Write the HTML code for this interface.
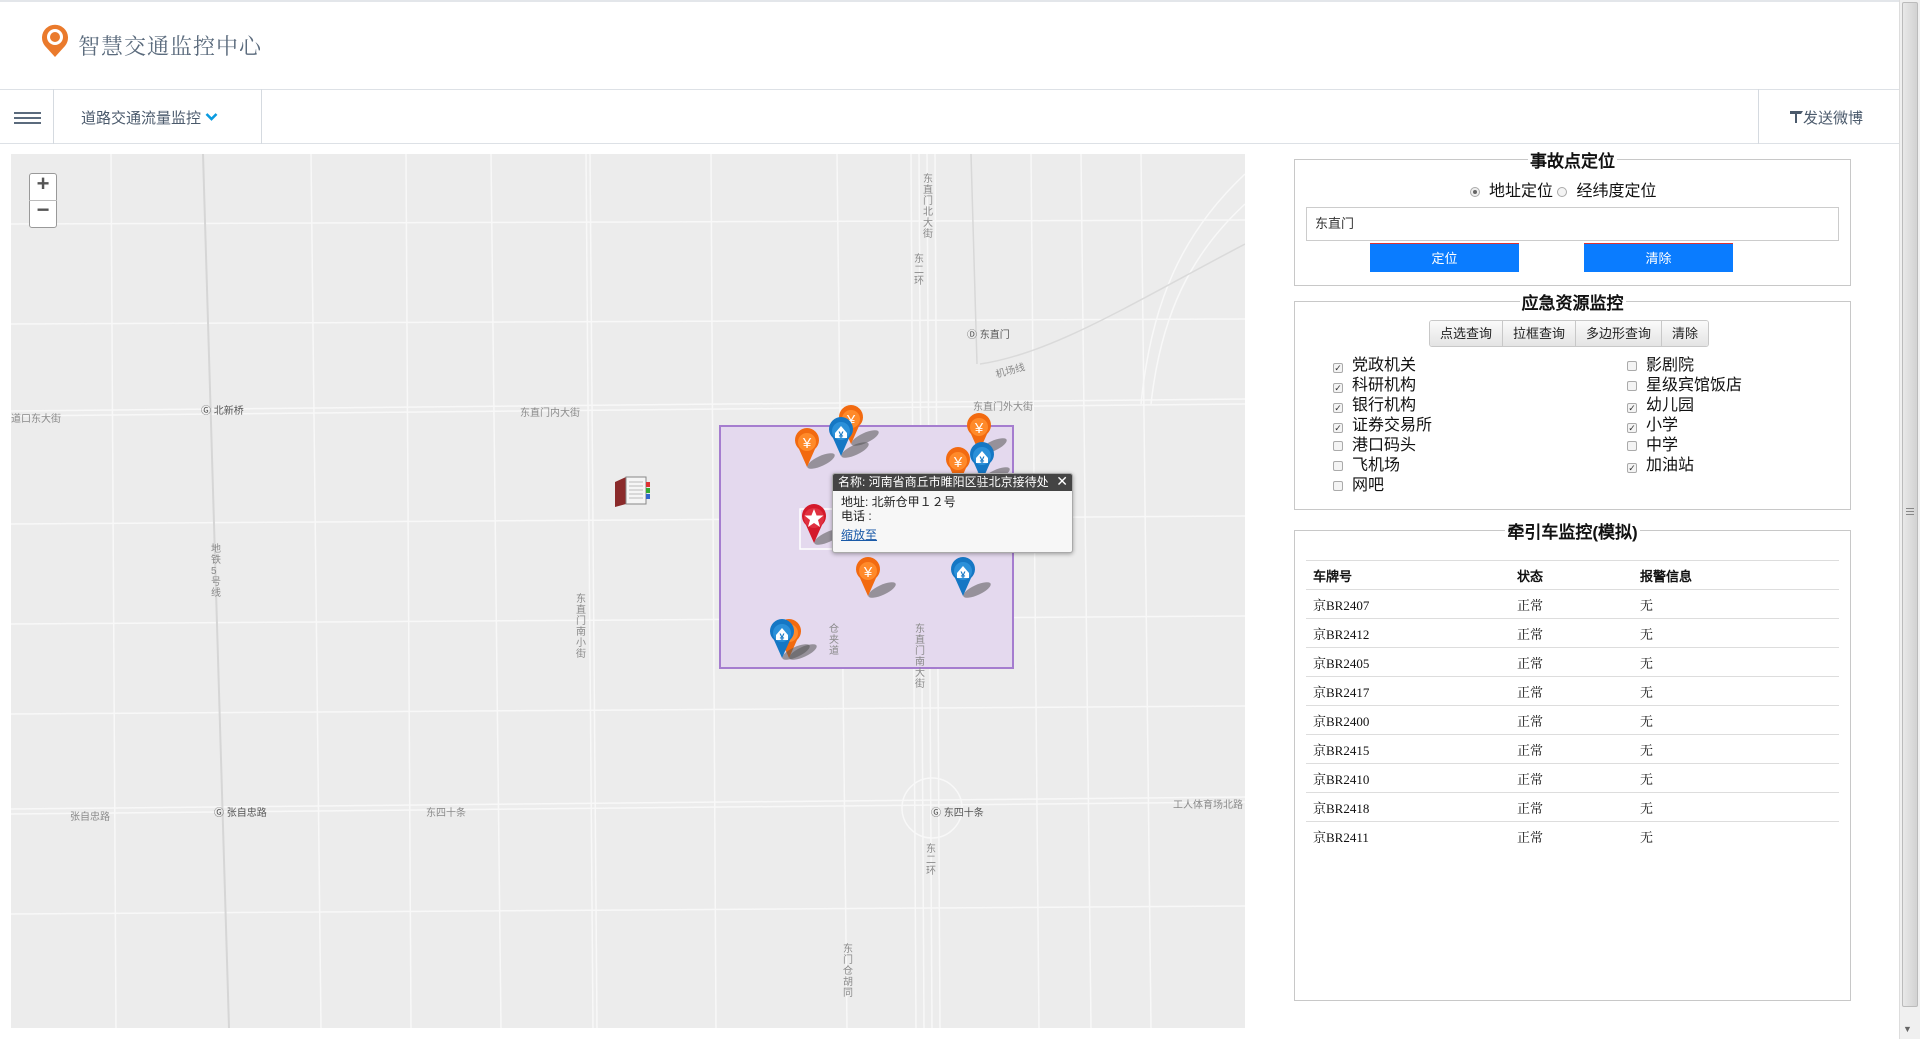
<!DOCTYPE html>
<html><head><meta charset="utf-8">
<style>
*{margin:0;padding:0;box-sizing:border-box}
body{width:1920px;height:1039px;overflow:hidden;background:#fff;font-family:"Liberation Sans","Noto Sans CJK SC",sans-serif;position:relative}
.abs{position:absolute}
.hdr-top{left:0;top:0;width:1900px;height:2px;background:#e3e6ea}
.title{left:78px;top:30px;font-size:22px;color:#5b6b7d;letter-spacing:1px;font-family:"Liberation Serif","Noto Serif CJK SC",serif}
.nav{left:0;top:89px;width:1900px;height:55px;border-top:1px solid #dde1e6;border-bottom:1px solid #dde1e6}
.vsep{top:89px;width:1px;height:55px;background:#d5dae0}
.menu{left:81px;top:107px;font-size:15px;color:#4b5a6c}
.send{left:1790px;top:107px;font-size:15px;color:#4b5a6c}
.scroll{left:1899px;top:0;width:21px;height:1039px;background:#f0f0f0;border-left:1px solid #ddd}
.thumb{left:1902px;top:2px;width:16px;height:1005px;background:linear-gradient(90deg,#e8e8e8,#d2d2d2);border:1px solid #bbb;border-radius:2px}
.map{left:11px;top:154px;width:1234px;height:874px;background:#ececec;overflow:hidden}
fieldset{position:absolute;border:2px solid #c8c8c8;border-width:1.5px}
legend{margin:0 auto;padding:0 2px;font-size:17px;font-weight:bold;color:#111;font-family:"Liberation Sans","WenQuanYi Zen Hei",sans-serif}
.btn{position:absolute;background:#0a7cff;color:#fff;font-size:13px;text-align:center;line-height:29px;height:29px;border-top:1px solid #d33}
.grp{position:absolute;left:1429px;top:320px;height:27px;display:flex;border:1px solid #c8c8c8;border-radius:3px;overflow:hidden}
.grp div{font-size:13px;line-height:25px;padding:0 10px;background:linear-gradient(#fafafa,#e4e4e4);border-right:1px solid #c8c8c8;color:#222}
.grp div:last-child{border-right:0}
.cb{position:absolute;font-size:16px;color:#111;line-height:20px;font-family:"Liberation Sans","WenQuanYi Zen Hei",sans-serif}
.cb i{display:inline-block;width:10px;height:10px;border:1px solid #aaa;border-radius:2px;background:#f4f4f4;margin-right:9px;vertical-align:-1px;font-style:normal;font-size:9px;line-height:9px;text-align:center;color:#333}
table{position:absolute;left:1306px;top:560px;width:533px;border-collapse:collapse;font-size:13px;font-family:"Liberation Serif","Noto Serif CJK SC",serif;color:#111}
td,th{height:29px;border-top:1.5px solid #ddd;text-align:left;padding-left:7px;font-weight:normal}
th{font-weight:bold;font-family:"Liberation Sans","WenQuanYi Zen Hei",sans-serif}
.lbl{position:absolute;font-size:10px;color:#8a8a8a}
</style></head><body>
<div class="abs hdr-top"></div>
<svg class="abs" style="left:40px;top:24px" width="30" height="34" viewBox="0 0 30 34"><path d="M15 33 L5 22 A13 13 0 1 1 25 22 Z" fill="#ea7a2c"/><circle cx="15" cy="13" r="8" fill="#fff"/><circle cx="15" cy="13" r="5" fill="#ea7a2c"/></svg>
<div class="abs title">智慧交通监控中心</div>
<div class="abs nav"></div>
<div class="abs" style="left:14px;top:112px;width:27px;height:2px;background:#5b6b7d;box-shadow:0 5px 0 #5b6b7d,0 10px 0 #5b6b7d"></div>
<div class="abs vsep" style="left:53px"></div>
<div class="abs menu">道路交通流量监控 <svg width="13" height="10" viewBox="0 0 13 10" style="vertical-align:1px"><path d="M1.5 2 L6.5 7 L11.5 2" stroke="#0a9be0" stroke-width="2.6" fill="none"/></svg></div>
<div class="abs vsep" style="left:261px"></div>
<div class="abs vsep" style="left:1758px"></div>
<div class="abs send"><svg width="13" height="13" viewBox="0 0 13 13" style="vertical-align:0"><path d="M0 1 H13 L11 4 H0 Z M5 3 H7 V13 H5 Z" fill="#4b5a6c"/></svg>发送微博</div>

<div class="abs map">
<svg width="1234" height="874" viewBox="0 0 1234 874">
<g stroke="#f8f8f8" fill="none" stroke-width="1.5">
<path d="M0 262 L1234 250"/><path d="M0 257 L1234 245"/>
<path d="M0 660 L1234 648"/><path d="M0 655 L1234 643"/>
<path d="M575 0 L582 874"/><path d="M579 0 L586 874"/>
<path d="M900 0 L905 874"/><path d="M908 0 L913 874"/><path d="M916 0 L921 874"/><path d="M924 0 L929 874"/>
<path d="M826 0 L836 874"/><path d="M1020 0 L1028 874"/><path d="M1130 0 L1140 874"/>
<path d="M0 70 L1234 66"/><path d="M0 170 L1234 165"/><path d="M0 370 L1234 362"/><path d="M0 470 L1234 462"/><path d="M0 560 L1234 552"/><path d="M0 760 L1234 752"/>
<path d="M100 0 L105 874"/><path d="M300 0 L310 874"/><path d="M395 0 L400 874"/><path d="M480 0 L490 874"/><path d="M700 0 L705 874"/><path d="M1070 0 L1080 874"/>
<circle cx="921" cy="654" r="30"/>
<path d="M1234 50 C1180 100 1150 160 1140 250"/>
<path d="M1234 20 C1170 80 1140 150 1130 250"/>
</g>
<path d="M192 0 L218 874" stroke="#d6d6d6" stroke-width="2"/>
<path d="M969 210 C1040 200 1120 150 1234 90" stroke="#dadada" stroke-width="1.5" fill="none"/>
<path d="M960 0 L966 210" stroke="#d8d8d8" stroke-width="1.5"/>
<rect x="709" y="272" width="293" height="242" fill="#e4d9ee" stroke="#a57dcf" stroke-width="2"/>
</svg>
<div class="lbl" style="left:0;top:256px">道口东大街</div>
<div class="lbl" style="left:190px;top:248px;color:#555">Ⓖ 北新桥</div>
<div class="lbl" style="left:509px;top:250px">东直门内大街</div>
<div class="lbl" style="left:962px;top:244px">东直门外大街</div>
<div class="lbl" style="left:956px;top:172px;color:#555">Ⓓ 东直门</div>
<div class="lbl" style="left:984px;top:208px;transform:rotate(-15deg)">机场线</div>
<div class="lbl" style="left:59px;top:654px">张自忠路</div>
<div class="lbl" style="left:203px;top:650px;color:#555">Ⓖ 张自忠路</div>
<div class="lbl" style="left:415px;top:650px">东四十条</div>
<div class="lbl" style="left:920px;top:650px;color:#555">Ⓖ 东四十条</div>
<div class="lbl" style="left:1162px;top:642px">工人体育场北路</div>
<div class="lbl" style="left:912px;top:20px;width:11px;line-height:11px">东直门北大街</div>
<div class="lbl" style="left:903px;top:100px;width:11px;line-height:11px">东二环</div>
<div class="lbl" style="left:915px;top:690px;width:11px;line-height:11px">东二环</div>
<div class="lbl" style="left:200px;top:390px;width:11px;line-height:11px">地铁5号线</div>
<div class="lbl" style="left:565px;top:440px;width:11px;line-height:11px">东直门南小街</div>
<div class="lbl" style="left:904px;top:470px;width:11px;line-height:11px">东直门南大街</div>
<div class="lbl" style="left:818px;top:470px;width:11px;line-height:11px">仓夹道</div>
<div class="lbl" style="left:832px;top:790px;width:11px;line-height:11px">东门仓胡同</div>
<div class="abs" style="left:18px;top:19px;width:28px;height:55px;background:#fff;border:1px solid #999;border-radius:3px"></div>
<div class="abs" style="left:18px;top:46px;width:28px;height:1px;background:#bbb"></div>
<div class="abs" style="left:18px;top:17px;width:28px;text-align:center;font-size:22px;color:#555;font-weight:bold">+</div>
<div class="abs" style="left:18px;top:43px;width:28px;text-align:center;font-size:22px;color:#555;font-weight:bold">−</div>
<svg class="abs" style="left:603px;top:322px" width="37" height="31" viewBox="0 0 37 31"><path d="M1 6 L12 1 L12 28 L1 31 Z" fill="#8a2a2a"/><rect x="12" y="1" width="20" height="27" fill="#f5f5f5" stroke="#888"/><g stroke="#bbb"><path d="M15 6H29M15 10H29M15 14H29M15 18H29M15 22H29"/></g><rect x="32" y="6" width="4" height="5" fill="#d33"/><rect x="32" y="12" width="4" height="5" fill="#3a3"/><rect x="32" y="18" width="4" height="5" fill="#36c"/></svg>
<svg class="abs" style="left:0;top:0" width="1234" height="874" viewBox="0 0 1234 874">
<defs>
<g id="o"><ellipse cx="14" cy="-6" rx="15" ry="5" fill="#555" opacity=".55" transform="rotate(-25 14 -6)"/><path d="M0 0 L-8 -18 A12 12 0 1 1 8 -18 Z" fill="#f26a10"/><circle cx="0" cy="-25" r="9" fill="#ff8a2a"/><text x="0" y="-19" font-size="15" text-anchor="middle" fill="#fff" font-family="Liberation Sans">¥</text></g>
<g id="b"><ellipse cx="14" cy="-6" rx="15" ry="5" fill="#555" opacity=".55" transform="rotate(-25 14 -6)"/><path d="M0 0 L-8 -18 A12 12 0 1 1 8 -18 Z" fill="#1577c4"/><circle cx="0" cy="-25" r="9" fill="#2b90d9"/><path d="M-6 -23 L0 -30 L6 -23 V-18 H-6 Z" fill="#fff"/><text x="0" y="-18" font-size="9" text-anchor="middle" fill="#1577c4" font-family="Liberation Sans" font-weight="bold">¥</text></g>
</defs>
<use href="#o" x="840" y="290"/>
<use href="#o" x="796" y="313"/>
<use href="#b" x="830" y="302"/>
<use href="#o" x="968" y="298"/>
<use href="#o" x="947" y="332"/>
<use href="#b" x="971" y="327"/>
<use href="#o" x="857" y="442"/>
<use href="#b" x="952" y="442"/>
<use href="#o" x="778" y="504"/>
<use href="#b" x="771" y="504"/>
<rect x="789" y="355" width="40" height="40" fill="none" stroke="#fff" stroke-width="1.5"/>
<g transform="translate(803,389)"><ellipse cx="14" cy="-6" rx="15" ry="5" fill="#555" opacity=".55" transform="rotate(-25 14 -6)"/><path d="M0 0 L-8 -18 A12 12 0 1 1 8 -18 Z" fill="#d4192b"/><circle cx="0" cy="-25" r="10" fill="#e03040"/><path d="M0 -34 L2.6 -27.5 L9.5 -27.5 L4 -23 L6 -16 L0 -20 L-6 -16 L-4 -23 L-9.5 -27.5 L-2.6 -27.5 Z" fill="#fff"/></g>
</svg>
<div class="abs" style="left:821px;top:319px;width:241px;height:80px;background:#f7f7f7;border:1px solid #aaa;border-radius:3px;box-shadow:0 1px 4px rgba(0,0,0,.35);overflow:hidden">
<div style="height:17px;background:#444;color:#fff;font-size:12px;line-height:17px;padding-left:5px;white-space:nowrap">名称: 河南省商丘市睢阳区驻北京接待处<span style="position:absolute;right:4px;top:-1px;font-size:14px;background:#444;padding-left:3px">✕</span></div>
<div style="font-size:12px;color:#222;padding:4px 8px;line-height:14px">地址: 北新仓甲１２号<br>电话 :<br><span style="color:#1a5aa8;text-decoration:underline;line-height:24px">缩放至</span></div>
</div>
<div class="abs" style="left:816px;top:348px;width:0;height:0;border:6px solid transparent;border-right-color:#f7f7f7"></div>
</div>

<fieldset style="left:1294px;top:147px;width:557px;height:139px"><legend>事故点定位</legend></fieldset>
<div class="cb" style="left:1470px;top:182px"><i style="border-radius:50%;background:#eee"></i><span style="position:absolute;left:3px;top:8px;width:4px;height:4px;border-radius:50%;background:#666"></span>地址定位 <i style="border-radius:50%;margin-left:0"></i>经纬度定位</div>
<div class="abs" style="left:1306px;top:207px;width:533px;height:34px;border:1px solid #ccc;font-size:13px;line-height:32px;padding-left:8px;color:#333">东直门</div>
<div class="btn" style="left:1370px;top:243px;width:149px">定位</div>
<div class="btn" style="left:1584px;top:243px;width:149px">清除</div>

<fieldset style="left:1294px;top:289px;width:557px;height:221px"><legend>应急资源监控</legend></fieldset>
<div class="grp"><div>点选查询</div><div>拉框查询</div><div>多边形查询</div><div>清除</div></div>
<div class="cb" style="left:1333px;top:356px"><i>✓</i>党政机关<br><i>✓</i>科研机构<br><i>✓</i>银行机构<br><i>✓</i>证券交易所<br><i></i>港口码头<br><i></i>飞机场<br><i></i>网吧</div>
<div class="cb" style="left:1627px;top:356px"><i></i>影剧院<br><i></i>星级宾馆饭店<br><i>✓</i>幼儿园<br><i>✓</i>小学<br><i></i>中学<br><i>✓</i>加油站</div>

<fieldset style="left:1294px;top:518px;width:557px;height:483px"><legend style="font-size:17px">牵引车监控(模拟)</legend></fieldset>
<table>
<tr><th style="width:204px">车牌号</th><th style="width:123px">状态</th><th>报警信息</th></tr>
<tr><td>京BR2407</td><td>正常</td><td>无</td></tr>
<tr><td>京BR2412</td><td>正常</td><td>无</td></tr>
<tr><td>京BR2405</td><td>正常</td><td>无</td></tr>
<tr><td>京BR2417</td><td>正常</td><td>无</td></tr>
<tr><td>京BR2400</td><td>正常</td><td>无</td></tr>
<tr><td>京BR2415</td><td>正常</td><td>无</td></tr>
<tr><td>京BR2410</td><td>正常</td><td>无</td></tr>
<tr><td>京BR2418</td><td>正常</td><td>无</td></tr>
<tr><td>京BR2411</td><td>正常</td><td>无</td></tr>
</table>

<div class="abs scroll"></div>
<div class="abs thumb"></div>
<div class="abs" style="left:1906px;top:508px;width:8px;height:1px;background:#888;box-shadow:0 3px 0 #888,0 6px 0 #888"></div>
<div class="abs" style="left:1903px;top:1024px;font-size:9px;color:#666">▼</div>
</body></html>
